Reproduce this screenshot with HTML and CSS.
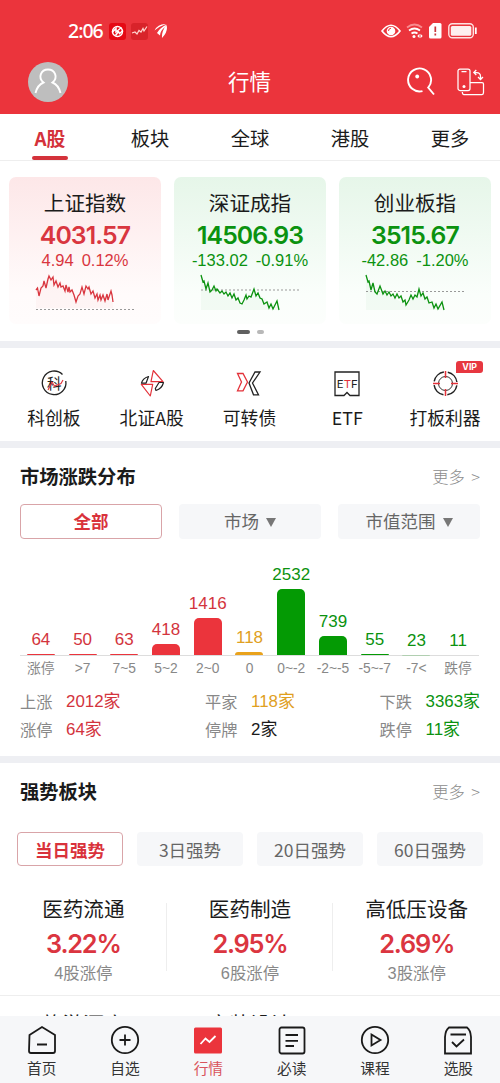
FILE: index.html
```html
<!DOCTYPE html>
<html lang="zh-CN">
<head>
<meta charset="utf-8">
<title>行情</title>
<link rel="stylesheet" href="styles.css">
</head>
<body>
<header class="header">
  <div class="status">
    <div class="status-left">
      <span class="clock">2:06</span>
      <svg width="17" height="17" viewBox="0 0 17 17"><rect width="17" height="17" rx="3" fill="#e50914"/><circle cx="8.5" cy="8.5" r="5" fill="none" stroke="#fff" stroke-width="1.400"/><path d="M3 9.500 L7 5.500 V9 L12.500 4.500 M6.500 12.500 L9.500 8.500 L10.500 10.500 L14 7.500" fill="none" stroke="#fff" stroke-width="1.500"/></svg>
      <svg width="17" height="17" viewBox="0 0 17 17"><rect width="17" height="17" rx="3" fill="#d8232a"/><path d="M1 10 L4 9 L6 11 L8 7.500 L10 9 L12 5.500 L13 8 L16 3.500" fill="none" stroke="#ffd5d0" stroke-width="1.200"/></svg>
      <svg width="14" height="16" viewBox="0 0 14 16"><path d="M0.500 7.500 Q4 0.500 12 1 Q6 3 0.500 7.500Z M3 10 Q6 4.500 12.500 1.500 L11 4 Q6 8 6 12.500Z M8 15 Q7.500 8 12.500 2 Q14.500 8 8 15Z" fill="#fff"/></svg>
    </div>
    <div class="status-right">
      <svg width="20" height="14" viewBox="0 0 20 14"><path d="M1 7 Q10 -4.500 19 7 Q10 18.500 1 7Z" fill="none" stroke="#fff" stroke-width="1.700"/><circle cx="10" cy="7" r="4.300" fill="#fff"/><path d="M10 4.200 A2.800 2.800 0 0 0 7.500 7" fill="none" stroke="#eb343c"/></svg>
      <svg width="18" height="16" viewBox="0 0 18 16"><path d="M1 4.500 Q8.500 -1.500 16 4.500" fill="none" stroke="#f88b8f" stroke-width="1.700"/><path d="M3 7.500 Q8.500 3.500 14 7.500 M5.500 10.500 Q8.500 8.500 11.500 10.500" fill="none" stroke="#fff" stroke-width="1.800"/><circle cx="8" cy="13.600" r="1.500" fill="#fff"/><path d="M13.500 10.800 L11.300 13 L13.500 15.200Z M14.500 10.800 L16.700 13 L14.500 15.200Z" fill="#fff"/></svg>
      <svg class="sim" width="13" height="16" viewBox="0 0 13 16"><path d="M4 0 H11 Q12.500 0 12.500 1.500 V14 Q12.500 15.500 11 15.500 H1.500 Q0 15.500 0 14 V4Z" fill="#fff"/><path d="M6.300 3.500 V9 M6.300 10.500 V12.500" stroke="#c9343a" stroke-width="1.700"/></svg>
      <svg width="30" height="16" viewBox="0 0 30 16"><rect x=".8" y=".8" width="24.500" height="14" rx="3.500" fill="none" stroke="#ffe2e2" stroke-width="1.400"/><rect x="2.800" y="2.900" width="20.500" height="9.800" rx="1.500" fill="#fff" opacity=".92"/><path d="M27.800 4.500 V11" stroke="#fff" stroke-width="1.800"/></svg>
    </div>
  </div>
  <div class="titlebar">
    <svg class="avatar" width="40" height="40" viewBox="0 0 40 40"><circle cx="20" cy="20" r="20" fill="#bebebe"/><path d="M7.500 31 Q9.500 23 15.500 20.500 C9.500 15.500 13 7.500 20 7.500 S30.500 15.500 24.500 20.500 Q30.500 23 32.500 31" fill="none" stroke="#fff" stroke-width="1.900"/></svg>
    <h1>行情</h1>
    <div class="tools">
      <svg width="30" height="30" viewBox="0 0 30 30"><path d="M16.500 24.100 A11.500 11.500 0 1 1 22.200 20.600 L28 27.500" fill="none" stroke="#fff" stroke-width="1.900"/><circle cx="11.200" cy="9.500" r="1.900" fill="#fff"/></svg>
      <svg width="30" height="30" viewBox="0 0 30 30"><g fill="none" stroke="#fff" stroke-width="1.250"><rect x="2" y="2" width="12" height="21.500" rx="2"/><path d="M5.500 4.700 H10.500 M14 15.500 H26 Q27.500 15.500 27.500 17 V25.500 Q27.500 27.500 26 27.500 H8 Q6.300 27.500 6.300 25"/><path d="M18 5.500 H20.500 Q24.500 5.500 24.500 9.500 V12 M20.300 3 L17.800 5.500 L20.300 8 M22 10 L24.500 12.500 L27 10"/></g><circle cx="8" cy="19.500" r="1.500" fill="#fff"/></svg>
    </div>
  </div>
</header>

<nav class="tabs"><span class="on">A股</span><span>板块</span><span>全球</span><span>港股</span><span>更多</span></nav>

<section class="indices">
  <div class="cards">
    <article class="card up">
      <h2>上证指数</h2><strong>4031.57</strong>
      <p><span>4.94</span><span>0.12%</span></p>
      <svg width="100" height="42" viewBox="0 0 100 42"><path class="area" d="M1 16 L15 2 L32 11 L42 25 L53 14 L78 28 V34 H1Z"/><path class="base" d="M1 35.500 H100"/><path class="line" d="M1 16 L2.500 14 L4 22 L6 14 L8 12 L9 7 L11 14 L13 5 L14 2 L16 6 L18 3 L19 11 L21 7 L23 13 L25 9 L26 13 L28 12 L30 17 L31 11 L33 18 L34 13 L35 18 L37 16 L39 21 L41 28 L43 22 L45 20 L47 13 L49 20 L51 12 L53 15 L54 13 L56 20 L58 17 L60 24 L62 20 L63 26 L65 21 L66 26 L68 21 L70 27 L72 20 L73 26 L76 17 L77 21 L78 28"/></svg>
    </article>
    <article class="card down">
      <h2>深证成指</h2><strong>14506.93</strong>
      <p><span>-133.02</span><span>-0.91%</span></p>
      <svg width="100" height="42" viewBox="0 0 100 42"><path class="area" d="M1 3 L10 15 L41 30 L54 17 L78 34 V36 H1Z"/><path class="base" d="M1 16 H99"/><path class="line" d="M1 1 L3 8 L4 7 L6 15 L8 9 L10 18 L12 16 L14 12 L16 17 L17 15 L20 19 L22 17 L24 20 L26 18 L28 22 L30 19 L32 24 L34 20 L36 26 L38 24 L40 29 L42 30 L44 26 L46 21 L47 25 L49 22 L51 23 L54 15 L56 22 L58 19 L60 24 L62 25 L64 30 L67 28 L69 34 L71 30 L73 35 L77 27 L79 36"/></svg>
    </article>
    <article class="card down">
      <h2>创业板指</h2><strong>3515.67</strong>
      <p><span>-42.86</span><span>-1.20%</span></p>
      <svg width="100" height="42" viewBox="0 0 100 42"><path class="area" d="M1 3 L10 15 L41 30 L54 17 L78 34 V36 H1Z"/><path class="base" d="M1 17.500 H99"/><path class="line" d="M1 1 L3 8 L4 7 L6 16 L8 9 L10 18 L12 20 L15 12 L18 20 L20 17 L22 21 L24 18 L26 22 L28 20 L30 24 L32 20 L34 24 L36 22 L38 28 L40 26 L41 31 L44 26 L46 21 L48 25 L50 21 L52 23 L54 15 L56 22 L58 19 L60 25 L62 23 L64 29 L67 28 L69 34 L71 30 L73 35 L77 28 L79 36"/></svg>
    </article>
  </div>
  <div class="dots"><i></i><i></i></div>
</section>

<section class="quick">
  <a><svg width="30" height="30" viewBox="0 0 30 30"><path d="M23.500 6.500 A11.800 11.800 0 1 0 26.800 13" fill="none" stroke="#222" stroke-width="1.300"/><text x="8" y="21" font-size="14.500" fill="#222">科</text><path d="M9 22 L13 14 L15.500 18 L22 15.500 L24 12" fill="none" stroke="#e3323a" stroke-width="1.100"/></svg><span>科创板</span></a>
  <a><svg width="30" height="30" viewBox="0 0 30 30"><g fill="none" stroke-width="1.200" stroke-linejoin="round"><path stroke="#e3323a" d="M16.300 2.500 L26 13.700 H14Z M4.300 16.300 H15.700 L13.300 28Z"/><path stroke="#222" d="M11.500 8.500 Q5.500 10.500 4.500 15.200 H9Z M26.500 14.500 Q25 20.500 19 22.500 L18.300 20.500 L22 14.500Z"/></g></svg><span>北证A股</span></a>
  <a><svg width="30" height="30" viewBox="0 0 30 30"><g fill="none" stroke-width="1.300"><path stroke="#e3323a" d="M3.500 5.500 H9 L13.500 14 L9 22.800 H3.500 L7.500 14Z"/><path stroke="#222" d="M26 4 H21 L15 15 L19.500 26.800 H24.500 L18.500 15Z"/></g></svg><span>可转债</span></a>
  <a><svg width="30" height="30" viewBox="0 0 30 30"><path d="M3 4 H27 V27.500 H18 L15 24.500 L12 27.500 H3Z" fill="none" stroke="#222" stroke-width="1.300"/><text class="etf" x="4.800" y="19.500" textLength="21" lengthAdjust="spacingAndGlyphs" font-size="10.500" fill="#222">E<tspan fill="#e3323a">T</tspan>F</text></svg><span>ETF</span></a>
  <a><svg width="30" height="30" viewBox="0 0 30 30"><g fill="none"><circle cx="15.500" cy="15.500" r="11.500" stroke="#222" stroke-width="1.500" stroke-dasharray="14.060 4" stroke-dashoffset="-2"/><circle cx="15.500" cy="15.500" r="7" stroke="#333" stroke-width="1"/><path d="M15.500 3 V10 M15.500 21 V28 M3 15.500 H10 M21 15.500 H28" stroke="#e3323a" stroke-width="1.500"/></g></svg><span>打板利器</span><em>VIP</em></a>
</section>

<section class="market">
  <div class="head"><h3>市场涨跌分布</h3><span>更多 &gt;</span></div>
  <div class="filters"><b class="on">全部</b><b>市场<i></i></b><b>市值范围<i></i></b></div>
  <div class="chart">
    <div class="red"><span>64</span><i style="height:1.500px"></i></div>
    <div class="red"><span>50</span><i style="height:1px"></i></div>
    <div class="red"><span>63</span><i style="height:1.500px"></i></div>
    <div class="red"><span>418</span><i style="height:11px"></i></div>
    <div class="red"><span>1416</span><i style="height:37px"></i></div>
    <div class="gold"><span>118</span><i style="height:3px"></i></div>
    <div class="green"><span>2532</span><i style="height:66px"></i></div>
    <div class="green"><span>739</span><i style="height:19px"></i></div>
    <div class="green"><span>55</span><i style="height:1.500px"></i></div>
    <div class="green faint"><span>23</span><i style="height:.5px"></i></div>
    <div class="green"><span>11</span><i style="height:0"></i></div>
  </div>
  <div class="axis"><span>涨停</span><span>&gt;7</span><span>7~5</span><span>5~2</span><span>2~0</span><span>0</span><span>0~-2</span><span>-2~-5</span><span>-5~-7</span><span>-7&lt;</span><span>跌停</span></div>
  <div class="stats">
    <dl><dt>上涨</dt><dd class="red">2012家</dd><dt>涨停</dt><dd class="red">64家</dd></dl>
    <dl><dt>平家</dt><dd class="gold">118家</dd><dt>停牌</dt><dd>2家</dd></dl>
    <dl><dt>下跌</dt><dd class="green">3363家</dd><dt>跌停</dt><dd class="green">11家</dd></dl>
  </div>
</section>

<section class="strong">
  <div class="head"><h3>强势板块</h3><span>更多 &gt;</span></div>
  <div class="periods"><b class="on">当日强势</b><b>3日强势</b><b>20日强势</b><b>60日强势</b></div>
  <div class="sectors">
    <div><h4>医药流通</h4><strong>3.22%</strong><p>4股涨停</p></div>
    <div><h4>医药制造</h4><strong>2.95%</strong><p>6股涨停</p></div>
    <div><h4>高低压设备</h4><strong>2.69%</strong><p>3股涨停</p></div>
  </div>
  <div class="sectors next"><div><h4>旅游酒店</h4></div><div><h4>家装设计</h4></div><div></div></div>
</section>

<footer class="bottom">
  <a><svg width="30" height="30" viewBox="0 0 30 30"><path d="M2.500 10 L15 2 L28 10 V26 Q28 28 26 28 H4 Q2 28 2 26Z M10 19.500 H20"/></svg>首页</a>
  <a><svg width="30" height="30" viewBox="0 0 30 30"><circle cx="15" cy="15" r="13.200"/><path d="M15 9.500 V20.500 M9.500 15 H20.500"/></svg>自选</a>
  <a class="on"><svg width="30" height="30" viewBox="0 0 30 30"><rect class="fill" x="1" y="2.500" width="28" height="26" rx="1.500"/><path d="M7.500 19 L12.500 13.500 L16.500 17 L22.500 11"/></svg>行情</a>
  <a><svg width="30" height="30" viewBox="0 0 30 30"><rect x="2.500" y="2.500" width="25" height="26" rx="2"/><path d="M8.500 10 H21 M8.500 15.800 H21 M8.500 21 H17"/></svg>必读</a>
  <a><svg width="30" height="30" viewBox="0 0 30 30"><circle cx="15" cy="15" r="13.200"/><path d="M11.500 9.500 L20.500 15 L11.500 20.500Z"/></svg>课程</a>
  <a><svg width="30" height="30" viewBox="0 0 30 30"><path d="M6 2.500 H24 Q27.500 5 28 12 V28.500 H2 V12 Q2.500 5 6 2.500Z M7.500 9.500 H23 M9 17 L13.500 21.500 L21 14.500"/></svg>选股</a>
</footer>
</body>
</html>
```
FILE: styles.css
```css
* { box-sizing: border-box; margin: 0; padding: 0; }
body {
  width: 500px; height: 1083px; overflow: hidden;
  display: flex; flex-direction: column;
  background: #fff; color: #1b1b1b;
  font-family: "Liberation Sans", "Noto Sans CJK SC", sans-serif;
}
i, em { font-style: normal; }
svg { display: block; flex: none; }
h1, h2, h3, h4, b { font-weight: 400; }

.header { height: 114px; flex: none; background: #eb343c; color: #fff; padding-top: 20px; }
.status { display: flex; justify-content: space-between; align-items: center; height: 22px; padding: 0 22px 0 68px; }
.status-left, .status-right { display: flex; align-items: center; }
.status-left { gap: 5px; }
.status-left svg:last-child { margin-left: 1px; }
.clock { width: 36px; font: 500 19.500px/22px "Noto Sans", sans-serif; letter-spacing: -1px; }
.status-right { gap: 5px; }
.status-right .sim { margin-right: 1px; }
.titlebar { display: grid; grid-template-columns: 200px 58px 1fr; align-items: center; height: 80px; padding: 0 14px 0 28px; }
.titlebar h1 { font-size: 21.500px; line-height: 30px; padding-top: 1px; }
.tools { display: flex; justify-content: flex-end; gap: 20px; }

.tabs { height: 47px; flex: none; display: grid; grid-template-columns: repeat(5, 1fr); border-bottom: 1px solid #eee; }
.tabs span { display: flex; flex-direction: column; align-items: center; font: 19.300px/48px "Noto Sans CJK SC", sans-serif; height: 46px; }
.tabs .on { color: #d4323b; font-weight: 700; font-size: 18.800px; }
.tabs .on::after { content: ""; width: 36px; height: 4px; border-radius: 2px; background: #d4323b; margin-top: -6px; flex: none; }

.indices { height: 187px; flex: none; padding: 16px 9px 0; border-bottom: 7px solid #eeeff3; }
.cards { display: grid; grid-template-columns: repeat(3, 1fr); gap: 13px; }
.card { height: 147px; border-radius: 7px; padding-top: 13px; display: flex; flex-direction: column; align-items: center; }
.card.up { color: #d9363f; background: linear-gradient(#fde7e8, #fffbfb 80%, #fffcfc); }
.card.down { color: #0b920f; background: linear-gradient(#e6f6e9, #fafefb 80%, #fcfefc); }
.card h2 { font-size: 20.600px; line-height: 28px; color: #1b1b1b; }
.card strong { font: 600 24.800px/34px Inter, sans-serif; letter-spacing: -.9px; }
.card p { display: flex; gap: 8px; font-size: 16.500px; line-height: 17px; white-space: nowrap; }
.card svg { margin-top: 5px; }
.card path { fill: none; stroke: currentColor; }
.card .area { stroke: none; fill: currentColor; opacity: .035; }
.card .base { stroke: #999; stroke-dasharray: 2 2; stroke-width: 1; }
.card .line { stroke-width: 1.300; }
.dots { display: flex; justify-content: center; align-items: center; gap: 7px; height: 16px; }
.dots i { height: 4px; width: 7px; border-radius: 2px; background: #b8b8b8; }
.dots i:first-child { width: 13px; background: #606060; }

.quick { height: 100px; flex: none; border-bottom: 7px solid #eeeff3; padding: 20px 6px 0 5px; display: grid; grid-template-columns: repeat(5, 1fr); }
.quick a { display: flex; flex-direction: column; align-items: center; position: relative; }
.quick a > span { font: 17.800px/38px "Noto Sans CJK SC", sans-serif; height: 40px; white-space: nowrap; }
.quick .etf { font-family: Inter, sans-serif; }
.quick em { position: absolute; top: -7px; left: 60px; width: 27px; height: 11.500px; background: #e73740; color: #fff; border-radius: 3px 3px 3px 0; font: 700 8.800px/11.500px Inter, sans-serif; text-align: center; }

.market { height: 315px; flex: none; border-bottom: 7px solid #eeeff3; padding: 14px 20px 0; }
.head { display: flex; justify-content: space-between; height: 30px; line-height: 31px; }
.head h3 { font-size: 19.300px; font-weight: 700; }
.head span { font: 300 16.300px/28px "Noto Sans CJK SC", sans-serif; color: #8c8c8c; word-spacing: 3px; }
.filters { display: grid; grid-template-columns: repeat(3, 142px); justify-content: space-between; margin-top: 12px; }
.filters b, .periods b { height: 35px; display: flex; align-items: center; justify-content: center; gap: 7px; border-radius: 4px; background: #f6f7f9; color: #666; font-size: 17.500px; line-height: 35px; }
.filters b { padding-top: 2px; }
.filters i { border: 5px solid transparent; border-top: 9px solid #777; border-bottom: 0; }
.filters b.on, .periods b.on { background: #fff; border: 1px solid #d9a4a8; color: #d9323b; font-weight: 700; }
.chart { display: grid; grid-template-columns: repeat(11, 1fr); height: 117px; border-bottom: 1px solid #ddd; margin-right: 1px; }
.chart div { display: flex; flex-direction: column; justify-content: flex-end; align-items: center; }
.chart span { font-size: 17px; line-height: 28px; }
.chart i { width: 28px; background: #eb343c; border-radius: 5px 5px 0 0; }
.chart .gold i { background: #e9a21c; }
.chart .green i { background: #049a04; }
.chart .faint i { opacity: .2; }
.red { color: #d3343d; }
.gold { color: #e0a01f; }
.green { color: #0b920f; }
.axis { display: grid; grid-template-columns: repeat(11, 1fr); margin-right: 1px; height: 24px; }
.axis span { display: flex; justify-content: center; white-space: nowrap; color: #888; font-size: 13.800px; line-height: 25px; }
.stats { display: flex; justify-content: space-between; margin-top: 8px; font-size: 16.200px; line-height: 28px; }
.stats dl { display: grid; grid-template-columns: 33px auto; column-gap: 13px; }
.stats dt { color: #888; white-space: nowrap; }
.stats dd { white-space: nowrap; font-size: 16.900px; }

.strong { height: 253px; flex: none; overflow: hidden; }
.strong .head { padding: 0 20px; margin-top: 14px; }
.periods { display: grid; grid-template-columns: repeat(4, 106px); justify-content: space-between; padding: 0 17px; margin-top: 25px; }
.periods b { height: 34px; font-family: "Noto Sans CJK SC", sans-serif; line-height: 32px; padding-top: 1px; white-space: nowrap; }
.sectors { display: grid; grid-template-columns: repeat(3, 1fr); margin-top: 15px; height: 115px; border-bottom: 1px solid #eee; }
.sectors > div { display: flex; flex-direction: column; align-items: center; padding-top: 14px; background: linear-gradient(#eee, #eee) right 22px / 1px 68px no-repeat; }
.sectors > div:last-child { background: none; }
.sectors h4 { font-size: 20.600px; line-height: 30px; }
.sectors strong { font: 600 25.300px/37px Inter, sans-serif; letter-spacing: -1.200px; color: #db3540; }
.sectors p { font-size: 16.400px; line-height: 22px; color: #888; }
.sectors.next { margin-top: 0; }
.sectors.next > div { background: none; padding-top: 14px; }

.bottom { height: 67px; flex: none; background: #f6f7f9; display: grid; grid-template-columns: repeat(6, 1fr); padding-top: 9px; }
.bottom a { display: flex; flex-direction: column; align-items: center; font-size: 14.700px; line-height: 28px; color: #333; }
.bottom svg { fill: none; stroke: #1a1a1a; stroke-width: 1.800; }
.bottom .on { color: #d9545c; }
.bottom .on svg { stroke: #fff; }
.bottom .fill { fill: #eb343c; stroke: none; }
```
